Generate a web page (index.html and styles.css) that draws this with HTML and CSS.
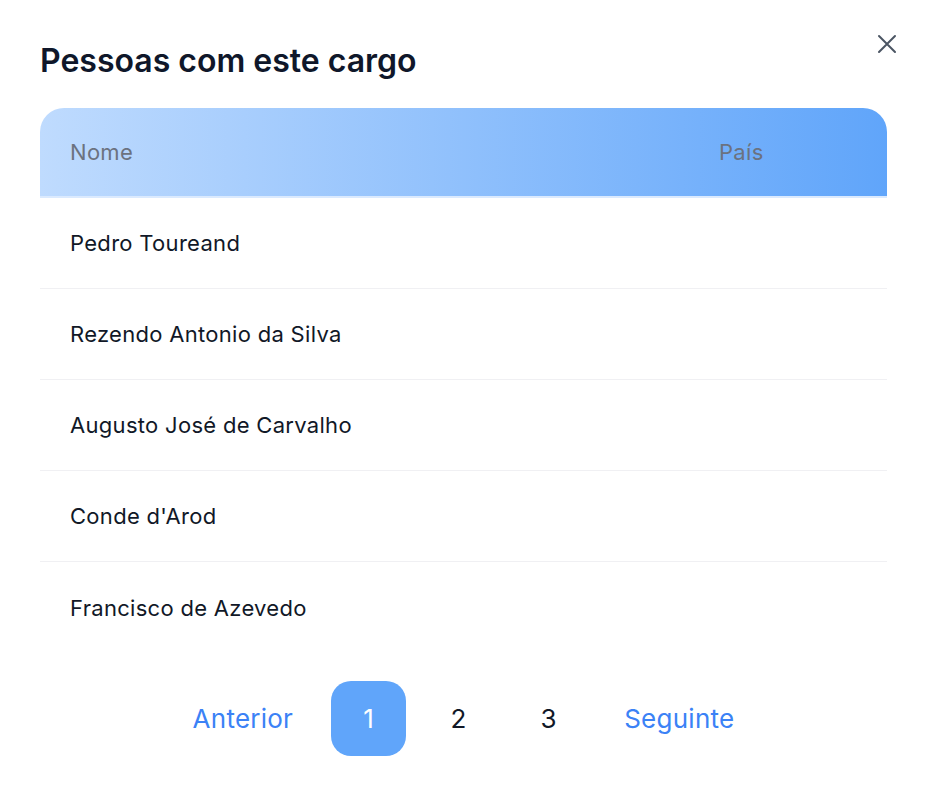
FILE: index.html
```html
<!DOCTYPE html>
<html lang="pt">
<head>
<meta charset="utf-8">
<title>Pessoas com este cargo</title>
<link rel="stylesheet" href="styles.css">
</head>
<body>
<div class="modal">
  <button class="close" aria-label="Fechar">
    <svg width="20" height="20" viewBox="0 0 20 20"><path d="M2 2 L18 18 M18 2 L2 18" stroke="#4b5563" stroke-width="2" stroke-linecap="round" fill="none"/></svg>
  </button>
  <h1 class="title">Pessoas com este cargo</h1>
  <div class="table">
    <div class="thead">
      <div class="cell name">Nome</div>
      <div class="cell country">País</div>
    </div>
    <div class="row"><div class="cell name">Pedro Toureand</div><div class="cell country"></div></div>
    <div class="row"><div class="cell name">Rezendo Antonio da Silva</div><div class="cell country"></div></div>
    <div class="row"><div class="cell name">Augusto José de Carvalho</div><div class="cell country"></div></div>
    <div class="row"><div class="cell name">Conde d'Arod</div><div class="cell country"></div></div>
    <div class="row last"><div class="cell name">Francisco de Azevedo</div><div class="cell country"></div></div>
  </div>
  <nav class="pager">
    <button class="nav">Anterior</button>
    <button class="page active">1</button>
    <button class="page">2</button>
    <button class="page">3</button>
    <button class="nav">Seguinte</button>
  </nav>
</div>
</body>
</html>
```
FILE: styles.css
```css
* { box-sizing: border-box; }
html, body { margin: 0; padding: 0; background: #fff; }
body { font-family: Inter, "Noto Sans", sans-serif; color: #111827; }
.modal { position: relative; padding: 41px 41px 40px 40px; }
.close { position: absolute; top: 34px; right: 31px; width: 20px; height: 20px; padding: 0; border: 0; background: none; cursor: pointer; display: flex; }
.title { margin: 0 0 27px; font-size: 32px; font-weight: 600; line-height: 40px; color: #0f172a; letter-spacing: 0; }
.table { width: 847px; }
.thead { display: grid; grid-template-columns: 1fr 198px; height: 90px; align-items: center; background: linear-gradient(90deg, #bfdbfe 0%, #60a5fa 100%); border-radius: 24px 24px 0 0; border-bottom: 2px solid #dbeafe; color: #6b7280; font-size: 22px; letter-spacing: 0.3px; }
.row { display: grid; grid-template-columns: 1fr 198px; height: 91px; align-items: center; border-bottom: 1px solid #f0f0f3; font-size: 22px; letter-spacing: 0.3px; color: #111827; }
.row.last { border-bottom: 0; }
.cell { padding: 0 30px; }
.pager { display: flex; justify-content: center; align-items: center; gap: 15px; margin-top: 28px; }
.pager button { font-family: Inter, "Noto Sans", sans-serif; font-size: 26px; letter-spacing: 0.25px; border: 0; background: none; cursor: pointer; }
.nav { color: #3b82f6; padding: 0 23px; height: 75px; }
.page { width: 75px; height: 75px; border-radius: 20px; color: #111827; padding: 0; }
.page.active { background: #60a5fa; color: #fff; }
```
